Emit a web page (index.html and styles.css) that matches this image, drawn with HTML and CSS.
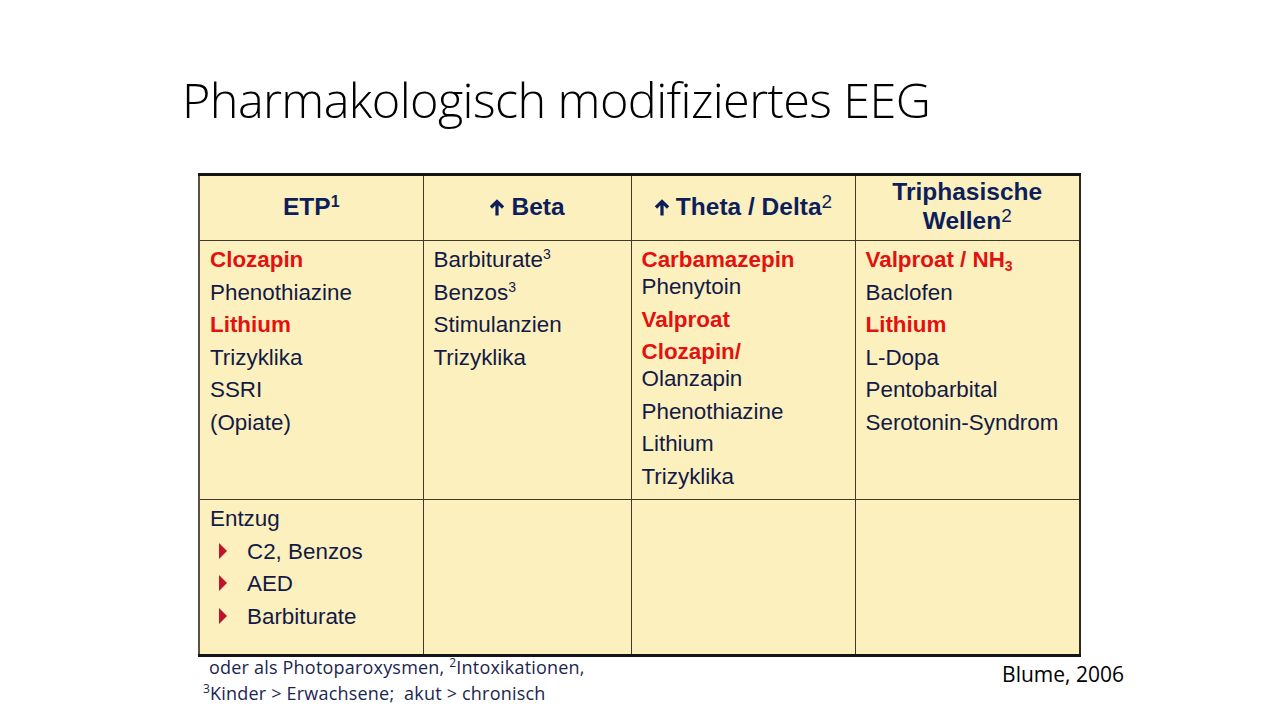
FILE: index.html
```html
<!DOCTYPE html>
<html lang="de">
<head>
<meta charset="utf-8">
<title>Pharmakologisch modifiziertes EEG</title>
<link rel="stylesheet" href="styles.css">
</head>
<body>
<div class="slide">
  <h1 class="title">Pharmakologisch modifiziertes EEG</h1>
  <table class="eeg">
    <colgroup>
      <col class="c1"><col class="c2"><col class="c3"><col class="c4">
    </colgroup>
    <thead>
      <tr class="head">
        <th>ETP<sup class="sb">1</sup></th>
        <th><span class="arrow"><svg viewBox="0 0 16 18" width="16" height="17"><path d="M8 17.5V3M1.6 9L8 2.6l6.4 6.4" fill="none" stroke="currentColor" stroke-width="3.4"/></svg></span>Beta</th>
        <th><span class="arrow"><svg viewBox="0 0 16 18" width="16" height="17"><path d="M8 17.5V3M1.6 9L8 2.6l6.4 6.4" fill="none" stroke="currentColor" stroke-width="3.4"/></svg></span>Theta / Delta<sup class="sr">2</sup></th>
        <th class="two">Triphasische<br>Wellen<sup class="sr">2</sup></th>
      </tr>
    </thead>
    <tbody>
      <tr class="main">
        <td>
          <p class="red">Clozapin</p>
          <p>Phenothiazine</p>
          <p class="red">Lithium</p>
          <p>Trizyklika</p>
          <p>SSRI</p>
          <p>(Opiate)</p>
        </td>
        <td>
          <p>Barbiturate<sup class="sm">3</sup></p>
          <p>Benzos<sup class="sm">3</sup></p>
          <p>Stimulanzien</p>
          <p>Trizyklika</p>
        </td>
        <td>
          <p><span class="red">Carbamazepin</span><br>Phenytoin</p>
          <p class="red">Valproat</p>
          <p><span class="red">Clozapin/</span><br>Olanzapin</p>
          <p>Phenothiazine</p>
          <p>Lithium</p>
          <p>Trizyklika</p>
        </td>
        <td>
          <p class="red">Valproat / NH<sub>3</sub></p>
          <p>Baclofen</p>
          <p class="red">Lithium</p>
          <p>L-Dopa</p>
          <p>Pentobarbital</p>
          <p>Serotonin-Syndrom</p>
        </td>
      </tr>
      <tr class="extra">
        <td>
          <p>Entzug</p>
          <p class="bullet"><span class="tri"></span>C2, Benzos</p>
          <p class="bullet"><span class="tri"></span>AED</p>
          <p class="bullet"><span class="tri"></span>Barbiturate</p>
        </td>
        <td></td>
        <td></td>
        <td></td>
      </tr>
    </tbody>
  </table>
  <div class="foot">
    <div class="notes">
      <p class="n1">oder als Photoparoxysmen, <sup>2</sup>Intoxikationen,</p>
      <p class="n2"><sup>3</sup>Kinder &gt; Erwachsene;&nbsp; akut &gt; chronisch</p>
    </div>
    <p class="source">Blume, 2006</p>
  </div>
</div>
</body>
</html>
```

FILE: styles.css
```css
html, body {
  margin: 0;
  padding: 0;
  background: #ffffff;
}

.slide {
  width: 1280px;
  height: 720px;
  box-sizing: border-box;
  padding-top: 70px;
  overflow: hidden;
}

.title {
  margin: 0 0 0 182px;
  font-family: "Open Sans", "Liberation Sans", sans-serif;
  font-weight: 300;
  font-size: 48.6px;
  line-height: 58px;
  height: 103px;
  color: #000000;
  letter-spacing: -0.6px;
}

.eeg {
  margin-left: 198px;
  border-collapse: collapse;
  table-layout: fixed;
  width: 881px;
  font-family: "Liberation Sans", Arial, sans-serif;
  font-size: 22.4px;
  color: #131a45;
  border-top: 3px solid #151515;
  border-bottom: 3px solid #151515;
  border-left: 2px solid #57533f;
  border-right: 2px solid #2c2a20;
}

.c1 { width: 224px; }
.c2 { width: 208px; }
.c3 { width: 224px; }
.c4 { width: 225px; }

.eeg th,
.eeg td {
  background: #fcf0bf;
  border: 1px solid #3d3a2a;
  padding: 0 10px;
}

.eeg thead tr { border-bottom: 1px solid #3d3a2a; }

.head { height: 66px; }

.eeg th {
  color: #0d1e5a;
  font-weight: bold;
  font-size: 24.5px;
  line-height: 29px;
  text-align: center;
  vertical-align: middle;
  padding-bottom: 4px;
}

.arrow {
  display: inline-block;
  vertical-align: -1px;
  margin-right: 6px;
  color: #0d1e5a;
}

.arrow svg { display: block; }

sup.sb {
  font-size: 16px;
  vertical-align: 8px;
  line-height: 0;
}

sup.sr {
  font-weight: normal;
  font-size: 19px;
  vertical-align: 7px;
  line-height: 0;
}

sup.sm {
  font-size: 14px;
  vertical-align: 8px;
  line-height: 0;
}

.eeg td {
  vertical-align: top;
  padding-top: 5px;
}

.main { height: 259px; }
.extra { height: 156px; }

.eeg td p {
  margin: 0 0 5.6px 0;
  line-height: 27px;
}

.red {
  color: #e3110f;
  font-weight: bold;
}

sub {
  font-size: 14px;
  vertical-align: -4px;
  line-height: 0;
}

.bullet {
  display: flex;
  align-items: center;
  padding-left: 9px;
}

.tri {
  flex: none;
  width: 0;
  height: 0;
  border-top: 8px solid transparent;
  border-bottom: 8px solid transparent;
  border-left: 8px solid #c3122a;
  margin-right: 20px;
  margin-top: -1px;
}

.foot {
  display: flex;
  justify-content: space-between;
  align-items: flex-start;
  font-family: "Open Sans", "Liberation Sans", sans-serif;
  margin-top: -3px;
  padding: 0 156px 0 203px;
}

.notes p {
  margin: 0;
  font-size: 18px;
  line-height: 26px;
  color: #1b2650;
  letter-spacing: 0.2px;
}

.notes .n1 { padding-left: 6px; }

.notes sup {
  font-size: 12px;
  vertical-align: 7px;
  line-height: 0;
}

.source {
  margin: 7px 0 0 0;
  font-size: 21px;
  line-height: 26px;
  color: #000000;
}
```
